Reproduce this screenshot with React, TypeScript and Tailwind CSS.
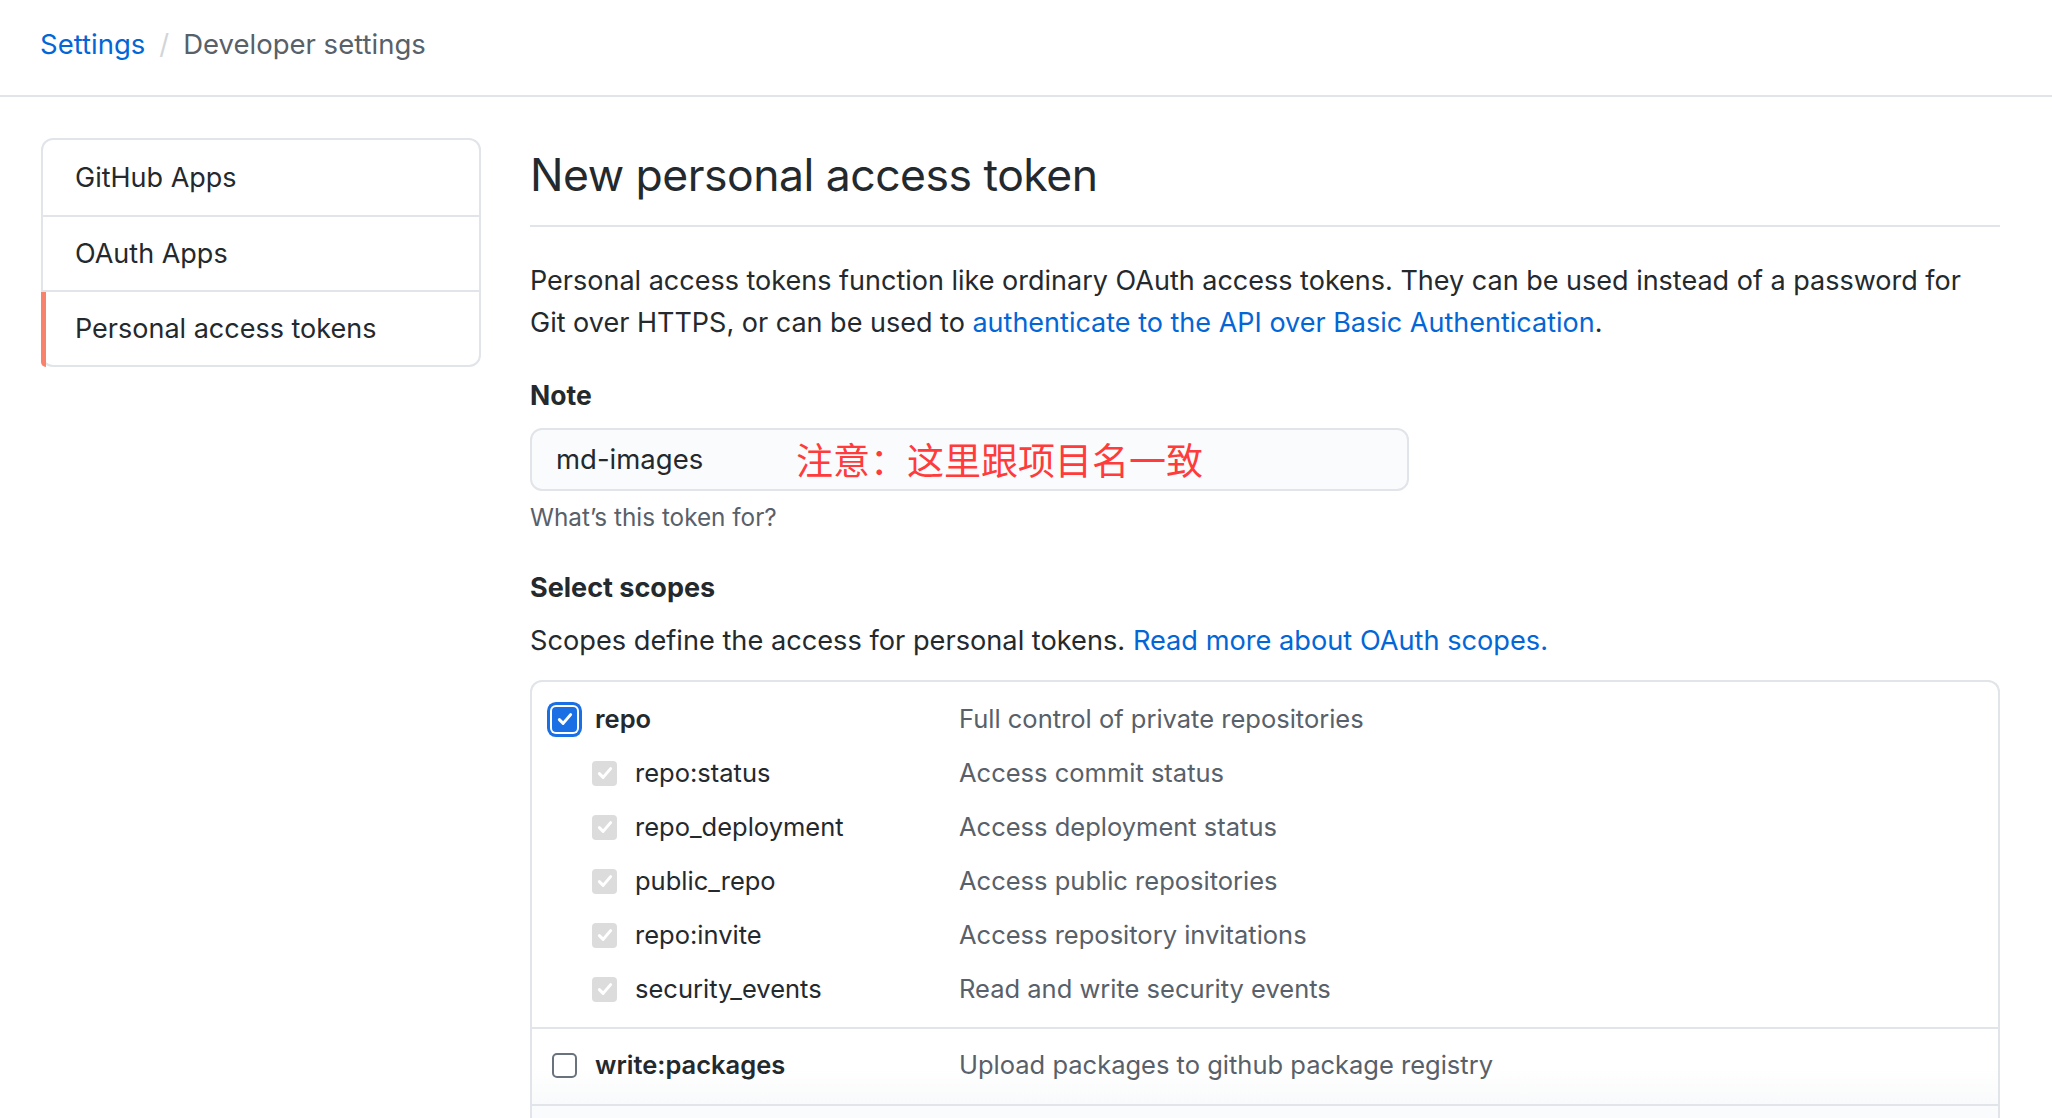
import { useState } from 'react';

type Scope = { name: string; desc: string };

const repoChildren: Scope[] = [
  { name: 'repo:status', desc: 'Access commit status' },
  { name: 'repo_deployment', desc: 'Access deployment status' },
  { name: 'public_repo', desc: 'Access public repositories' },
  { name: 'repo:invite', desc: 'Access repository invitations' },
  { name: 'security_events', desc: 'Read and write security events' },
];

const navItems = ['GitHub Apps', 'OAuth Apps', 'Personal access tokens'];

function CheckMark({ className }: { className: string }) {
  return (
    <svg viewBox="0 0 16 16" className={className} fill="none" stroke="currentColor" strokeWidth="2.4" strokeLinecap="round" strokeLinejoin="round">
      <path d="M3.5 8.5l3 3 6-7" />
    </svg>
  );
}

export default function App() {
  const [note, setNote] = useState('md-images');

  return (
    <div className="min-h-screen bg-white text-[#24292e] font-['Inter','Noto_Sans_CJK_SC',sans-serif]">
      {/* Breadcrumb header */}
      <div className="h-[97px] border-b-2 border-[#e1e4e8] px-[40px] pt-[26px]">
        <div className="flex items-center text-[27.5px] leading-[36px]">
          <a href="#" className="text-[#0366d6]">Settings</a>
          <span className="mx-[14px] text-[#d1d5da]">/</span>
          <span className="text-[#586069]">Developer settings</span>
        </div>
      </div>

      <div className="flex px-[41px] pt-[41px]">
        {/* Sidebar */}
        <nav className="w-[440px] shrink-0 self-start rounded-[12px] border-2 border-[#e1e4e8]">
          {navItems.map((item, i) => (
            <div
              key={item}
              className={`relative flex h-[75px] items-center px-[32px] pt-[1px] text-[27px] ${i > 0 ? 'border-t-2 border-[#e1e4e8]' : ''}`}
            >
              {i === navItems.length - 1 && (
                <span className="absolute -left-[2px] top-0 -bottom-[2px] w-[5px] rounded-bl-[12px] bg-[#f9826c]" />
              )}
              {item}
            </div>
          ))}
        </nav>

        {/* Main */}
        <main className="ml-[49px] w-[1470px]">
          <h2 className="border-b-2 border-[#e1e4e8] pt-[7px] pb-[20px] text-[44.5px] leading-[60px] font-normal tracking-[-0.5px]">
            New personal access token
          </h2>

          <p className="mt-[33px] text-[27px] leading-[42px]">
            Personal access tokens function like ordinary OAuth access tokens. They can be used instead of a password for
            <br />
            Git over HTTPS, or can be used to{' '}
            <a href="#" className="text-[#0366d6]">authenticate to the API over Basic Authentication</a>.
          </p>

          <div className="mt-[30px] text-[26.5px] leading-[42px] font-bold">Note</div>
          <div className="mt-[12px] flex h-[63px] w-[879px] items-center rounded-[12px] border-2 border-[#e1e4e8] bg-[#fafbfc] pl-[24px]">
            <input
              value={note}
              onChange={(e) => setNote(e.target.value)}
              className="w-[232px] bg-transparent text-[27.5px] outline-none"
            />
            <span className="ml-[8px] text-[37px] leading-none text-[#ff3b3b] font-['Noto_Sans_CJK_SC',sans-serif]">
              注意：这里跟项目名一致
            </span>
          </div>
          <div className="mt-[8px] text-[24.3px] leading-[36px] text-[#586069]">What’s this token for?</div>

          <div className="mt-[32px] text-[27px] leading-[42px] font-bold">Select scopes</div>
          <p className="mt-[11px] text-[27.2px] leading-[42px]">
            Scopes define the access for personal tokens.{' '}
            <a href="#" className="text-[#0366d6]">Read more about OAuth scopes.</a>
          </p>

          {/* Scopes table */}
          <div className="mt-[18px] rounded-t-[12px] border-2 border-b-0 border-[#e1e4e8] text-[25.5px]">
            <div className="pt-[10px] pb-[11px]">
              <div className="flex h-[54px] items-center">
                <div className="flex w-[427px] items-center pl-[20px]">
                  <span className="flex h-[25px] w-[25px] items-center justify-center rounded-[4px] bg-[#1b6fe4] text-white shadow-[0_0_0_2px_#ffffff,0_0_0_5px_#1b6fe4]">
                    <CheckMark className="h-[20px] w-[20px]" />
                  </span>
                  <span className="ml-[18px] font-semibold">repo</span>
                </div>
                <span className="text-[#586069]">Full control of private repositories</span>
              </div>
              {repoChildren.map((s) => (
                <div key={s.name} className="flex h-[54px] items-center">
                  <div className="flex w-[427px] items-center pl-[60px]">
                    <span className="flex h-[25px] w-[25px] items-center justify-center rounded-[4px] bg-[#dcdcdc] text-white">
                      <CheckMark className="h-[20px] w-[20px]" />
                    </span>
                    <span className="ml-[18px]">{s.name}</span>
                  </div>
                  <span className="text-[#586069]">{s.desc}</span>
                </div>
              ))}
            </div>

            <div className="flex h-[77px] items-center border-t-2 border-[#e1e4e8] bg-gradient-to-b from-white from-50% to-[#f9fafb] pb-[3px]">
              <div className="flex w-[427px] items-center pl-[20px]">
                <span className="h-[25px] w-[25px] rounded-[5px] border-2 border-[#6a737d] bg-white" />
                <span className="ml-[18px] font-semibold">write:packages</span>
              </div>
              <span className="text-[#586069]">Upload packages to github package registry</span>
            </div>

            <div className="h-[30px] border-t-2 border-[#e1e4e8] bg-[#fafbfc]" />
          </div>
        </main>
      </div>
    </div>
  );
}
